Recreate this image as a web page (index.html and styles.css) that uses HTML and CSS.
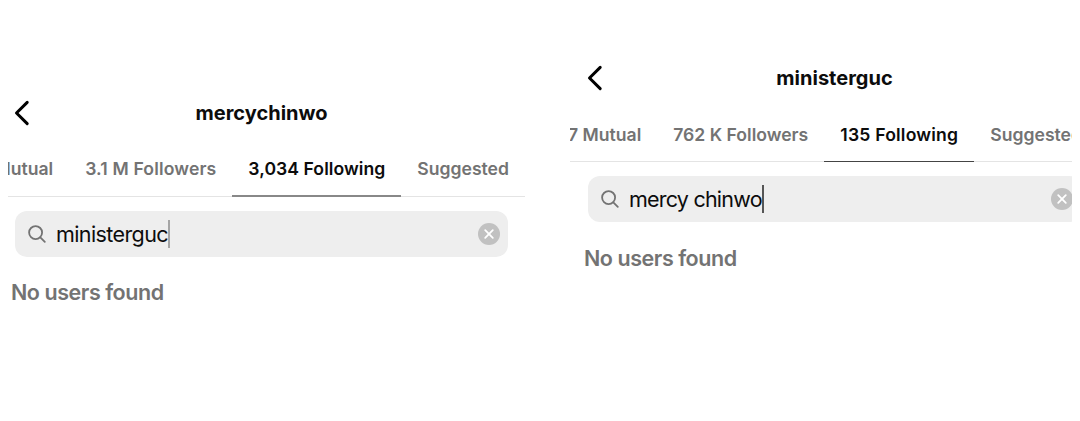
FILE: index.html
```html
<!DOCTYPE html>
<html lang="en">
<head>
    <meta charset="UTF-8">
    <meta name="viewport" content="width=device-width, initial-scale=1.0">
    <title>Following</title>
    <link rel="stylesheet" href="styles.css">
</head>
<body>
    <section class="panel panel-left">
        <div class="screen">
            <header class="top-bar">
                <svg class="back" viewBox="0 0 16 26"><path d="M13.2 2.4 2.5 13l10.7 10.6"/></svg>
                <h1>mercychinwo</h1>
            </header>
            <nav class="tabs">
                <span class="tab">Mutual</span>
                <span class="tab followers">3.1 M Followers</span>
                <span class="tab active">3,034 Following</span>
                <span class="tab">Suggested</span>
            </nav>
            <div class="search">
                <svg class="search-icon" viewBox="0 0 18 18"><circle cx="7.6" cy="7.6" r="6.5"/><path d="m12.3 12.3 4.5 4.5"/></svg>
                <span class="query">ministerguc</span>
                <span class="caret"></span>
                <svg class="clear" viewBox="0 0 22 22"><circle cx="11" cy="11" r="11"/><path d="m7.2 7.2 7.6 7.6m0-7.6-7.6 7.6"/></svg>
            </div>
            <p class="empty">No users found</p>
        </div>
    </section>

    <section class="panel panel-right">
        <div class="screen">
            <header class="top-bar">
                <svg class="back" viewBox="0 0 16 26"><path d="M13.2 2.4 2.5 13l10.7 10.6"/></svg>
                <h1>ministerguc</h1>
            </header>
            <nav class="tabs">
                <span class="tab">7 Mutual</span>
                <span class="tab">762 K Followers</span>
                <span class="tab active">135 Following</span>
                <span class="tab">Suggested</span>
            </nav>
            <div class="search">
                <svg class="search-icon" viewBox="0 0 18 18"><circle cx="7.6" cy="7.6" r="6.5"/><path d="m12.3 12.3 4.5 4.5"/></svg>
                <span class="query">mercy chinwo</span>
                <span class="caret"></span>
                <svg class="clear" viewBox="0 0 22 22"><circle cx="11" cy="11" r="11"/><path d="m7.2 7.2 7.6 7.6m0-7.6-7.6 7.6"/></svg>
            </div>
            <p class="empty">No users found</p>
        </div>
    </section>
</body>
</html>
```
FILE: styles.css
```css
* {
    box-sizing: border-box;
}
body {
    margin: 0;
    height: 421px;
    display: flex;
    align-items: flex-start;
    background-color: #fff;
    color: #0c0c0c;
    font-family: Inter, "Liberation Sans", sans-serif;
    overflow: hidden;
}
/* Each panel crops a 528px wide phone screen */
.panel {
    display: flex;
    flex-shrink: 0;
    overflow: hidden;
}
.panel-left {
    width: 517px;
    margin: 93px 0 0 8px;
    justify-content: flex-end;
}
.panel-right {
    width: 502px;
    margin: 58px 0 0 45px;
}
.screen {
    width: 528px;
    flex-shrink: 0;
}
.top-bar {
    display: grid;
    grid-template-columns: 61px 1fr 60px;
    align-items: center;
    height: 40px;
}
.back {
    width: 16px;
    height: 26px;
    margin-left: 17px;
    fill: none;
    stroke: #000;
    stroke-width: 3;
    stroke-linecap: round;
    stroke-linejoin: round;
}
h1 {
    margin: 0;
    font-size: 20px;
    font-weight: 700;
    line-height: 24px;
    text-align: center;
    white-space: nowrap;
}
.tabs {
    display: flex;
    justify-content: flex-end;
    height: 64px;
    border-bottom: 1px solid #e4e4e4;
}
.tab {
    flex-shrink: 0;
    height: 64px;
    padding: 25px 16px 0;
    color: #737373;
    font-size: 17.6px;
    font-weight: 600;
    line-height: 22px;
    white-space: nowrap;
}
.tab.active {
    border-bottom: 2px solid #888;
    color: #0c0c0c;
    letter-spacing: 0.05px;
}
.followers {
    letter-spacing: 0.14px;
}
.search {
    display: flex;
    align-items: center;
    width: 493px;
    height: 46px;
    margin: 14px 0 0 18px;
    padding: 0 8px 0 13px;
    border-radius: 12px;
    background-color: #eeeeee;
}
.search-icon {
    width: 18px;
    height: 18px;
    margin-right: 10px;
    fill: none;
    stroke: #737373;
    stroke-width: 1.8;
    stroke-linecap: round;
}
.query {
    font-size: 21.5px;
    line-height: 28px;
    letter-spacing: -0.6px;
    white-space: nowrap;
}
.caret {
    width: 2px;
    height: 28px;
    background-color: #a5a5a5;
}
.clear {
    width: 22px;
    height: 22px;
    margin-left: auto;
    fill: #c1c1c1;
    stroke: #fff;
    stroke-width: 1.8;
    stroke-linecap: round;
}
.clear circle {
    stroke: none;
}
.empty {
    margin: 21px 0 0 14px;
    color: #737373;
    font-size: 21.5px;
    font-weight: 600;
    line-height: 28px;
    letter-spacing: -0.45px;
}

/* Right screen */
.panel-right .tab {
    padding-top: 26px;
}
.panel-right .tab.active {
    border-bottom: 1px solid #444;
    letter-spacing: 0.2px;
}
.panel-right .query {
    letter-spacing: -0.78px;
}
.panel-right .caret {
    background-color: #555;
}
.panel-right .empty {
    margin-top: 22px;
}
```
